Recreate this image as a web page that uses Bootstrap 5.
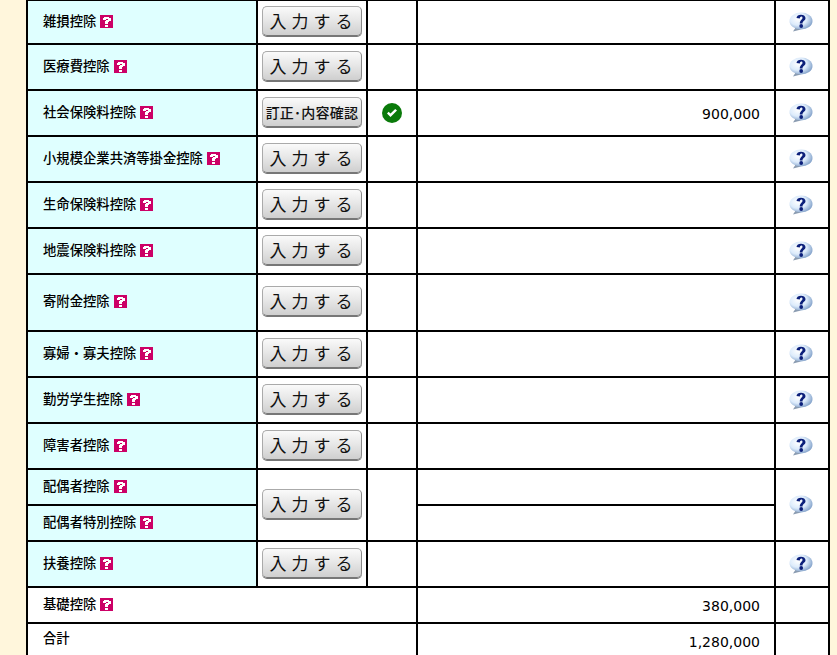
<!DOCTYPE html>
<html lang="ja">
<head>
<meta charset="utf-8">
<title>所得控除</title>
<link href="https://cdn.jsdelivr.net/npm/bootstrap@5.3.0/dist/css/bootstrap.min.css" rel="stylesheet">
<style>
html,body{height:655px;overflow:hidden}
body{background:#fff6dc;padding-left:26px;font-family:"Noto Sans CJK JP","Liberation Sans",sans-serif;color:#000}
.koujo{width:802px;table-layout:fixed;border-collapse:collapse;margin:0;--bs-table-bg:#fff;--bs-table-border-color:#000;--bs-table-color:#000}
.koujo>tbody>tr>td{border:2px solid #000;padding:0;vertical-align:middle;background:#fff;box-shadow:none}
.koujo>tbody>tr:first-child>td{border-top:0}
.koujo>tbody>tr>td.lbl{background:#dfffff;padding:0 0 2px 15px;font-size:13.33px;font-weight:500;line-height:16px;white-space:nowrap}
.koujo>tbody>tr>td.plain{background:#fff;padding:0 0 2px 15px;font-size:13.33px;font-weight:500;line-height:16px}
.koujo>tbody>tr>td.plain.tot{padding-bottom:6px}
.koujo>tbody>tr>td.amt{text-align:right;padding:3px 14px 0 0;font:14px/16px "DejaVu Sans",sans-serif}
.h46{height:46px}.h43{height:43px}.h57{height:57px}.h36{height:36px}
.nyu{width:100px;height:30px;padding:0;border:1px solid #aaa;border-bottom-color:#777;border-right-color:#888;border-radius:5px;background:linear-gradient(#fafafa,#e8e8e8 45%,#cfcfcf);box-shadow:0 1px 0 #777;color:#111;font-size:17px;line-height:26px;letter-spacing:5px;text-indent:3px;font-family:"Noto Sans CJK JP",sans-serif;white-space:nowrap;display:block;margin:0 0 2px 4px}
.nyu:hover{background:linear-gradient(#fafafa,#e8e8e8 45%,#cfcfcf);color:#111;border-color:#aaa}
.nyu.nar{font-size:14px;letter-spacing:.25px;text-indent:0;font-weight:500}
.hlp{display:inline-block;vertical-align:-2px;margin-left:1px;shape-rendering:crispEdges}
.bub{display:block;margin:1px 0 0 13px}
.chk{display:block;margin:0 auto}
</style>
</head>
<body>
<svg width="0" height="0" class="position-absolute">
<defs>
<radialGradient id="bg" cx="38%" cy="38%" r="68%"><stop offset="0" stop-color="#ffffff"/><stop offset=".55" stop-color="#dcebfb"/><stop offset="1" stop-color="#7c9cc6"/></radialGradient>
<symbol id="hq" viewBox="0 0 13 13"><rect width="13" height="13" fill="#cc0066"/><path d="M4 2h5v1h2v3H9v1H8v2H5V6h1V5h2V4H6v1H3V3h1zM5 10h3v2H5z" fill="#fff"/></symbol>
<symbol id="bq" viewBox="0 0 24 20"><path d="M7 15L4 19.500 12 17.500Z" fill="#8a9bb0"/><ellipse cx="12" cy="9" rx="11.500" ry="8.500" fill="url(#bg)"/><path d="M7.500 6C7.500 1.500 16.500 1.500 16.500 6C16.500 8.800 13.500 8.800 13.500 11.500H10.800C10.800 8 13.500 8 13.500 5.800C13.500 3.800 10.800 4 10.800 6.500Z" fill="#0b1f7a"/><circle cx="12.200" cy="14" r="1.900" fill="#0b1f7a"/></symbol>
<symbol id="ok" viewBox="0 0 20 20"><circle cx="10" cy="10" r="10" fill="#0a7a0a"/><path d="M5 10.500l3.500 3.500 6.500-6.500-1.800-1.500-4.700 4.600-1.900-1.900z" fill="#fff"/></symbol>
</defs>
</svg>
<table class="table table-bordered koujo">
<colgroup><col style="width:230px"><col style="width:110px"><col style="width:50px"><col style="width:358px"><col style="width:54px"></colgroup>
<tbody>
<tr class="h43"><td class="lbl">雑損控除 <svg class="hlp" width="13" height="13"><use href="#hq"/></svg></td><td><button type="button" class="btn nyu">入力する</button></td><td></td><td></td><td><svg class="bub" width="24" height="20"><use href="#bq"/></svg></td></tr>
<tr class="h46"><td class="lbl">医療費控除 <svg class="hlp" width="13" height="13"><use href="#hq"/></svg></td><td><button type="button" class="btn nyu">入力する</button></td><td></td><td></td><td><svg class="bub" width="24" height="20"><use href="#bq"/></svg></td></tr>
<tr class="h46"><td class="lbl">社会保険料控除 <svg class="hlp" width="13" height="13"><use href="#hq"/></svg></td><td><button type="button" class="btn nyu nar">訂正･内容確認</button></td><td><svg class="chk" width="20" height="20"><use href="#ok"/></svg></td><td class="amt">900,000</td><td><svg class="bub" width="24" height="20"><use href="#bq"/></svg></td></tr>
<tr class="h46"><td class="lbl">小規模企業共済等掛金控除 <svg class="hlp" width="13" height="13"><use href="#hq"/></svg></td><td><button type="button" class="btn nyu">入力する</button></td><td></td><td></td><td><svg class="bub" width="24" height="20"><use href="#bq"/></svg></td></tr>
<tr class="h46"><td class="lbl">生命保険料控除 <svg class="hlp" width="13" height="13"><use href="#hq"/></svg></td><td><button type="button" class="btn nyu">入力する</button></td><td></td><td></td><td><svg class="bub" width="24" height="20"><use href="#bq"/></svg></td></tr>
<tr class="h46"><td class="lbl">地震保険料控除 <svg class="hlp" width="13" height="13"><use href="#hq"/></svg></td><td><button type="button" class="btn nyu">入力する</button></td><td></td><td></td><td><svg class="bub" width="24" height="20"><use href="#bq"/></svg></td></tr>
<tr class="h57"><td class="lbl">寄附金控除 <svg class="hlp" width="13" height="13"><use href="#hq"/></svg></td><td><button type="button" class="btn nyu">入力する</button></td><td></td><td></td><td><svg class="bub" width="24" height="20"><use href="#bq"/></svg></td></tr>
<tr class="h46"><td class="lbl">寡婦・寡夫控除 <svg class="hlp" width="13" height="13"><use href="#hq"/></svg></td><td><button type="button" class="btn nyu">入力する</button></td><td></td><td></td><td><svg class="bub" width="24" height="20"><use href="#bq"/></svg></td></tr>
<tr class="h46"><td class="lbl">勤労学生控除 <svg class="hlp" width="13" height="13"><use href="#hq"/></svg></td><td><button type="button" class="btn nyu">入力する</button></td><td></td><td></td><td><svg class="bub" width="24" height="20"><use href="#bq"/></svg></td></tr>
<tr class="h46"><td class="lbl">障害者控除 <svg class="hlp" width="13" height="13"><use href="#hq"/></svg></td><td><button type="button" class="btn nyu">入力する</button></td><td></td><td></td><td><svg class="bub" width="24" height="20"><use href="#bq"/></svg></td></tr>
<tr class="h36"><td class="lbl">配偶者控除 <svg class="hlp" width="13" height="13"><use href="#hq"/></svg></td><td rowspan="2"><button type="button" class="btn nyu">入力する</button></td><td rowspan="2"></td><td></td><td rowspan="2"><svg class="bub" width="24" height="20"><use href="#bq"/></svg></td></tr>
<tr class="h36"><td class="lbl">配偶者特別控除 <svg class="hlp" width="13" height="13"><use href="#hq"/></svg></td><td></td></tr>
<tr class="h46"><td class="lbl">扶養控除 <svg class="hlp" width="13" height="13"><use href="#hq"/></svg></td><td><button type="button" class="btn nyu">入力する</button></td><td></td><td></td><td><svg class="bub" width="24" height="20"><use href="#bq"/></svg></td></tr>
<tr class="h36"><td class="plain" colspan="3">基礎控除 <svg class="hlp" width="13" height="13"><use href="#hq"/></svg></td><td class="amt">380,000</td><td></td></tr>
<tr class="h36"><td class="plain tot" colspan="3">合計</td><td class="amt">1,280,000</td><td></td></tr>
</tbody>
</table>
<script src="https://cdn.jsdelivr.net/npm/bootstrap@5.3.0/dist/js/bootstrap.bundle.min.js"></script>
</body>
</html>
